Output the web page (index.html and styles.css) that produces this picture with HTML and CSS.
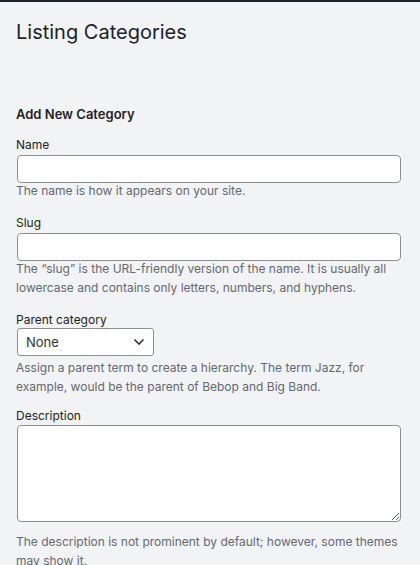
FILE: index.html
```html
<!DOCTYPE html>
<html>
<head>
<meta charset="utf-8">
<link rel="stylesheet" href="styles.css">
</head>
<body>
<div class="topbar"></div>
<div class="wrap">
  <h1 class="title">Listing Categories</h1>
  <h2 class="subtitle">Add New Category</h2>
  <div class="field field-first">
    <label class="label">Name</label>
    <input class="input" type="text">
    <p class="help">The name is how it appears on your site.</p>
  </div>
  <div class="field">
    <label class="label">Slug</label>
    <input class="input" type="text">
    <p class="help">The “slug” is the URL-friendly version of the name. It is usually all lowercase and contains only letters, numbers, and hyphens.</p>
  </div>
  <div class="field">
    <label class="label">Parent category</label>
    <div class="select">
      <span>None</span>
      <svg width="12" height="8" viewBox="0 0 12 8"><path d="M1.5 1.5 L6 6 L10.5 1.5" fill="none" stroke="#2c3338" stroke-width="1.6"/></svg>
    </div>
    <p class="help help-select">Assign a parent term to create a hierarchy. The term Jazz, for example, would be the parent of Bebop and Big Band.</p>
  </div>
  <div class="field field-desc">
    <label class="label">Description</label>
    <textarea class="textarea"></textarea>
    <p class="help help-area">The description is not prominent by default; however, some themes may show it.</p>
  </div>
</div>
</body>
</html>
```
FILE: styles.css
```css
html, body {
  margin: 0;
  padding: 0;
  background: #f2f3f5;
  font-family: Inter, "Noto Sans", sans-serif;
  color: #1d2327;
}
.topbar {
  height: 2px;
  background: #1d2327;
}
.wrap {
  padding: 0 20px 0 16px;
}
.title {
  font-size: 20px;
  font-weight: 400;
  margin: 0;
  padding: 17px 0 0;
  line-height: 26px;
}
.subtitle {
  font-size: 13px;
  font-weight: 600;
  margin: 59px 0 0;
  line-height: 20px;
}
.field {
  margin-top: 12px;
  display: flex;
  flex-direction: column;
  align-items: flex-start;
}
.field-first {
  margin-top: 11px;
}
.field-desc {
  margin-top: 9px;
}
.label {
  font-size: 12px;
  line-height: 20px;
  color: #1d2327;
}
.input {
  box-sizing: border-box;
  width: 100%;
  height: 28px;
  margin: 0 0 0 1px;
  border: 1px solid #8c8f94;
  border-radius: 4px;
  background: #fff;
}
.help {
  margin: -2px 0 0;
  font-size: 12px;
  line-height: 19.5px;
  color: #646970;
}
.help-select {
  margin-top: 2px;
}
.help-area {
  margin-top: 10px;
}
.select {
  box-sizing: border-box;
  width: 137px;
  height: 28px;
  margin: -2px 0 0 1px;
  border: 1px solid #8c8f94;
  border-radius: 3px;
  background: #fff;
  display: flex;
  align-items: center;
  justify-content: space-between;
  padding: 0 8px 0 8px;
  font-size: 13px;
  color: #2c3338;
}
.textarea {
  display: block;
  box-sizing: border-box;
  width: 100%;
  height: 97px;
  margin: -1px 0 0 1px;
  border: 1px solid #8c8f94;
  border-radius: 4px;
  background: #fff;
  resize: both;
}
```
